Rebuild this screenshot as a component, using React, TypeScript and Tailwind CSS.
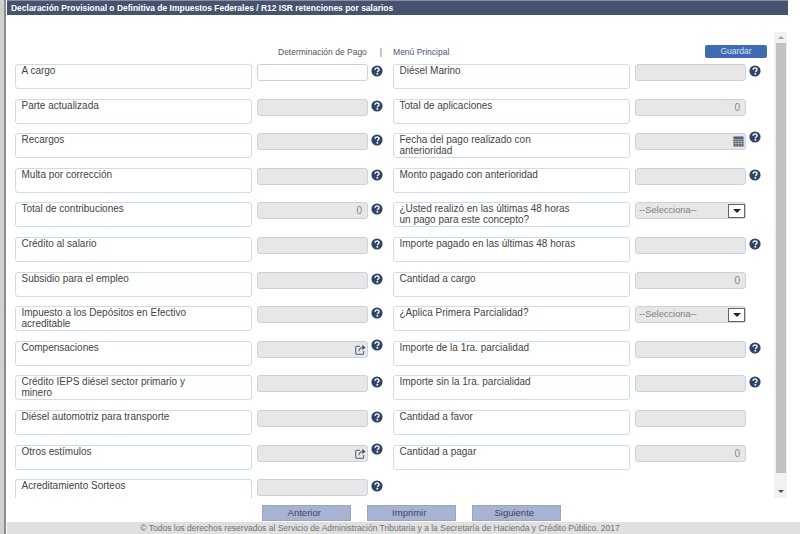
type Field = {
  label: string;
  value?: string;
  white?: boolean;
  help?: boolean;
  kind?: "input" | "select" | "calendar" | "link";
};

const left: Field[] = [
  { label: "A cargo", white: true, help: true },
  { label: "Parte actualizada", help: true },
  { label: "Recargos", help: true },
  { label: "Multa por corrección", help: true },
  { label: "Total de contribuciones", value: "0", help: true },
  { label: "Crédito al salario", help: true },
  { label: "Subsidio para el empleo", help: true },
  { label: "Impuesto a los Depósitos en Efectivo acreditable", help: true },
  { label: "Compensaciones", help: true, kind: "link" },
  { label: "Crédito IEPS diésel sector primario y minero", help: true },
  { label: "Diésel automotriz para transporte", help: true },
  { label: "Otros estímulos", help: true, kind: "link" },
  { label: "Acreditamiento Sorteos", help: true },
];

const right: Field[] = [
  { label: "Diésel Marino", help: true },
  { label: "Total de aplicaciones", value: "0" },
  { label: "Fecha del pago realizado con anterioridad", help: true, kind: "calendar" },
  { label: "Monto pagado con anterioridad", help: true },
  { label: "¿Usted realizó en las últimas 48 horas un pago para este concepto?", kind: "select" },
  { label: "Importe pagado en las últimas 48 horas", help: true },
  { label: "Cantidad a cargo", value: "0" },
  { label: "¿Aplica Primera Parcialidad?", kind: "select" },
  { label: "Importe de la 1ra. parcialidad", help: true },
  { label: "Importe sin la 1ra. parcialidad", help: true },
  { label: "Cantidad a favor" },
  { label: "Cantidad a pagar", value: "0" },
];

function HelpIcon({ raised }: { raised?: boolean }) {
  return (
    <svg viewBox="0 0 12 12" className={`h-[12px] w-[12px] shrink-0 ${raised ? "-mt-[2px]" : "mt-[1px]"}`}>
      <circle cx="6" cy="6" r="5.6" fill="#2f4468" />
      <path d="M4.1 4.8c0-2.5 3.9-2.5 3.9-.1 0 1.3-1.6 1.3-1.6 2.5" fill="none" stroke="#fff" strokeWidth="1.4" />
      <rect x="5.5" y="8" width="1.7" height="1.6" fill="#fff" />
    </svg>
  );
}

function CalendarIcon() {
  return (
    <svg viewBox="0 0 12 12" className="h-[11px] w-[11px]">
      <rect x="0.5" y="0.5" width="11" height="11" fill="#56606e" />
      <path d="M0.5 3.8h11M0.5 6h11M0.5 8.2h11M3.2 3.8v7.7M6 3.8v7.7M8.8 3.8v7.7" stroke="#c9ccd1" strokeWidth="0.6" />
    </svg>
  );
}

function LinkIcon() {
  return (
    <svg viewBox="0 0 12 12" fill="none" stroke="#4a5a75" strokeWidth="1.1" className="h-[11px] w-[11px]">
      <path d="M5.5 2.5H2a1.2 1.2 0 0 0-1.2 1.2V10A1.2 1.2 0 0 0 2 11.2h6.3A1.2 1.2 0 0 0 9.5 10V7.5" />
      <path d="M4.3 8c.2-2.8 2.2-4.2 4.6-4.2" />
      <path d="M8 .8 11.6 3.8 8 6.8z" fill="#4a5a75" stroke="none" />
    </svg>
  );
}

function Row({ field, clip }: { field: Field; clip?: boolean }) {
  return (
    <div className="flex items-start">
      <div
        className={`w-[237px] shrink-0 border border-[#ccdcec] px-[5.5px] text-[10px] leading-[11px] text-[#444] ${
          clip ? "h-[19px] rounded-t-[3px] border-b-0" : "h-[25px] rounded-[3px]"
        }`}
      >
        <p className="w-[178px]">{field.label}</p>
      </div>
      <div className="ml-[5px] flex items-start">
        {field.kind === "select" ? (
          <div className="flex h-[17px] w-[111px] shrink-0 items-center justify-between rounded-[3px] border border-[#c9d3e0] bg-[#e7e7e7] pl-[3px] text-[9.3px] text-[#808080]">
            --Selecciona--
            <span className="flex h-[14px] w-[17px] items-center justify-center border border-[#666] bg-white">
              <span className="h-0 w-0 border-x-[4px] border-t-[4px] border-x-transparent border-t-[#222]" />
            </span>
          </div>
        ) : (
          <div
            className={`flex h-[17px] w-[111px] shrink-0 items-center justify-end rounded-[3px] border border-[#c9d3e0] text-[10px] text-[#888] ${
              field.value ? "pr-[5px]" : "pr-[1px]"
            } ${field.white ? "bg-white" : "bg-[#e7e7e7]"}`}
          >
            {field.value}
            {field.kind === "calendar" && <CalendarIcon />}
            {field.kind === "link" && <LinkIcon />}
          </div>
        )}
        {field.help && (
          <div className="ml-[3px]">
            <HelpIcon raised={field.kind === "link" || field.kind === "calendar"} />
          </div>
        )}
      </div>
    </div>
  );
}

export default function App() {
  return (
    <div className="flex h-[534px] w-[800px] overflow-hidden bg-white font-['Liberation_Sans',Arial,sans-serif]">
      <div className="h-full w-[6px] shrink-0 border-r-2 border-[#8c8c8c] bg-[#d0d0d0]" />
      <div className="ml-[1px] flex min-w-0 flex-1 flex-col">
        <div className="mr-[12px] flex h-[15px] shrink-0 items-center border-t border-[#8a8fa0] bg-[#46536f] pl-[4px] text-[8.47px] font-bold text-white">
          Declaración Provisional o Definitiva de Impuestos Federales / R12 ISR retenciones por salarios
        </div>
        <div className="flex min-h-0 flex-1">
          <div className="min-w-0 flex-1 overflow-hidden">
            <div className="relative flex h-[49px] items-start pl-[271px] pt-[31px] text-[8.5px] text-[#555]">
              <span>Determinación de Pago</span>
              <span className="ml-[13px] mr-[11px] text-[#666]">|</span>
              <span className="text-[#3f5578]">Menú Principal</span>
              <button className="absolute left-[698px] top-[30px] h-[13px] w-[62px] rounded-[2px] bg-[#3f6bb5] text-[8.5px] leading-[13px] text-[#d8e2f2]">
                Guardar
              </button>
            </div>
            <div className="flex pl-[8px]">
              <div className="flex w-[378px] shrink-0 flex-col gap-[9.6px]">
                {left.map((f, i) => (
                  <Row key={f.label} field={f} clip={i === left.length - 1} />
                ))}
              </div>
              <div className="flex flex-col gap-[9.6px]">
                {right.map((f) => (
                  <Row key={f.label} field={f} />
                ))}
              </div>
            </div>
          </div>
          <div className="mr-[13px] mt-[17px] flex h-[466px] w-[13px] shrink-0 flex-col items-center bg-[#f1f1f1]">
            <div className="mt-[4px] h-0 w-0 border-x-[3px] border-b-[3px] border-x-transparent border-b-[#a0a0a0]" />
            <div className="mt-[4px] h-[430px] w-[10px] bg-[#c1c1c1]" />
            <div className="mt-[17px] h-0 w-0 border-x-[3px] border-t-[3px] border-x-transparent border-t-[#505050]" />
          </div>
        </div>
        <div className="flex h-[17px] shrink-0 items-start gap-[15.5px] pl-[254.5px]">
          {["Anterior", "Imprimir", "Siguiente"].map((b) => (
            <button
              key={b}
              className="h-[16px] w-[89.5px] border border-[#9aa5c4] bg-[#a8b2d2] pr-[4px] text-[9.5px] leading-[14px] text-[#3a4560]"
            >
              {b}
            </button>
          ))}
        </div>
        <div className="flex h-[12px] shrink-0 items-center justify-center bg-[#e0e0e0] pr-[47px] text-[8.5px] text-[#707070]">
          © Todos los derechos reservados al Servicio de Administración Tributaria y a la Secretaría de Hacienda y Crédito Público. 2017
        </div>
      </div>
    </div>
  );
}
